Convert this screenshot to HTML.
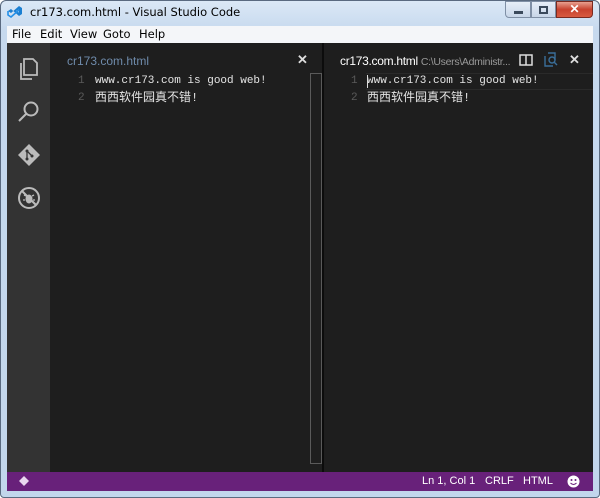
<!DOCTYPE html>
<html><head><meta charset="utf-8"><style>
*{margin:0;padding:0;box-sizing:border-box}
body{width:600px;height:498px;overflow:hidden;background:#fff;font-family:"Liberation Sans",sans-serif;position:relative}
.frame{position:absolute;left:0;top:0;width:600px;height:498px;background:linear-gradient(#dbe8f6,#c6d9ee 30px,#c2d6ec);border:1px solid #5a6a80;border-radius:6px 6px 4px 4px}
.title{position:absolute;left:30px;top:5px;color:#000;font-family:"DejaVu Sans",sans-serif;font-size:11.5px}
.menu{position:absolute;left:7px;top:26px;width:586px;height:17px;background:#f4f6f9;font-size:11.5px;font-family:"DejaVu Sans",sans-serif}
.menu span{position:absolute;top:1px}
.dark{position:absolute;left:7px;top:43px;width:586px;height:429px;background:#1e1e1e}
.act{position:absolute;left:7px;top:43px;width:43px;height:429px;background:#333}
.status{position:absolute;left:7px;top:472px;width:586px;height:19px;background:#68217a;color:#fff;font-size:11px}
.status span{position:absolute;top:3px}
.code{position:absolute;font-family:"Liberation Mono","Noto Sans CJK SC",monospace;font-size:11px;color:#e4e4e4;line-height:17px;white-space:nowrap}
.code .cjk{font-size:12px}
.ln{position:absolute;font-family:"Liberation Mono",monospace;font-size:11px;color:#5a5a5a;line-height:17px}
</style></head><body>
<div class="frame"></div>
<svg style="position:absolute;left:7px;top:6px" width="16" height="14" viewBox="0 0 16 14"><path d="M1 5 L4 3 L12 10 L15 8 L15 2 L12 0 L4 7 L1 5Z M12 3.5 L12 6.5 L9 5Z" fill="#1b7fd1"/><path d="M1 5 L1 9 L4 11 L12 4" stroke="#2490e8" stroke-width="1.6" fill="none"/></svg>
<div class="title">cr173.com.html - Visual Studio Code</div>
<div style="position:absolute;left:505px;top:1px;width:26px;height:17px;border:1px solid #7f8fa5;border-radius:0 0 0 4px;background:linear-gradient(#e6eef8,#c8d6e8)"><div style="position:absolute;left:8px;top:9px;width:9px;height:3px;background:#3b4a5c"></div></div>
<div style="position:absolute;left:531px;top:1px;width:25px;height:17px;border:1px solid #7f8fa5;background:linear-gradient(#e6eef8,#c8d6e8)"><div style="position:absolute;left:7px;top:4px;width:9px;height:8px;border:2px solid #3b4a5c"></div></div>
<div style="position:absolute;left:556px;top:1px;width:37px;height:17px;border:1px solid #7a2a20;border-radius:0 0 4px 0;background:linear-gradient(#e8a090,#c8422e 50%,#d85a40);color:#fff;font-size:12px;font-weight:bold;text-align:center;line-height:15px">✕</div>
<div class="menu"><span style="left:5px">File</span><span style="left:33px">Edit</span><span style="left:63px">View</span><span style="left:96px">Goto</span><span style="left:132px">Help</span></div>
<div class="dark"></div>
<div class="act"></div>
<svg style="position:absolute;left:18px;top:57px" width="22" height="24" viewBox="0 0 22 24" fill="none" stroke="#bbb" stroke-width="1.8"><path d="M6 2 H15 L19 6 V18 H6Z"/><path d="M3 6 V22 H14"/></svg>
<svg style="position:absolute;left:17px;top:100px" width="24" height="24" viewBox="0 0 24 24" fill="none" stroke="#bbb" stroke-width="2"><circle cx="14" cy="9" r="6.5"/><path d="M9.5 13.5 L2 21"/></svg>
<svg style="position:absolute;left:17px;top:143px" width="24" height="24" viewBox="0 0 24 24"><path d="M12 1 L23 12 L12 23 L1 12Z" fill="#bbb"/><circle cx="10" cy="8" r="1.5" fill="#333"/><circle cx="10" cy="16" r="1.5" fill="#333"/><circle cx="15" cy="13" r="1.5" fill="#333"/><path d="M10 8 V16 M10 8 L15 13" stroke="#333" stroke-width="1.3"/></svg>
<svg style="position:absolute;left:17px;top:186px" width="24" height="24" viewBox="0 0 24 24" fill="none" stroke="#bbb" stroke-width="2"><circle cx="12" cy="12" r="10"/><path d="M5 5 L19 19"/><ellipse cx="12" cy="13" rx="3.5" ry="4.5" fill="#bbb" stroke="none"/><path d="M7 9 L9 10 M17 9 L15 10 M6 14 H8 M18 14 H16" stroke-width="1.3"/></svg>
<div style="position:absolute;left:67px;top:54px;font-size:12px;color:#6f8bab">cr173.com.html</div>
<div style="position:absolute;left:297px;top:52px;font-size:13px;color:#ddd;font-weight:bold">✕</div>
<div class="ln" style="left:78px;top:73px">1<br>2</div>
<div class="code" style="left:95px;top:73px">www.cr173.com is good web!<br><span class="cjk">西西软件园真不错!</span></div>
<div style="position:absolute;left:310px;top:73px;width:12px;height:391px;border:1px solid #5a5a5a"></div>
<div style="position:absolute;left:322px;top:43px;width:2px;height:429px;background:#0c0c0c"></div>
<div style="position:absolute;left:340px;top:54px;font-size:12px;color:#fff;white-space:nowrap;letter-spacing:-0.3px">cr173.com.html <span style="font-size:10.5px;color:#999">C:\Users\Administr...</span></div>
<svg style="position:absolute;left:519px;top:54px" width="14" height="12"><rect x="1" y="1" width="12" height="10" fill="none" stroke="#ddd" stroke-width="1.5"/><path d="M7 1 V11" stroke="#ddd" stroke-width="1.5"/></svg>
<svg style="position:absolute;left:543px;top:52px" width="16" height="16" fill="none" stroke="#3a6f9a" stroke-width="1.4"><path d="M2 4 V14 H10 M5 1 H12 V8"/><circle cx="9" cy="8" r="3"/><path d="M11 10 L14 13"/></svg>
<div style="position:absolute;left:569px;top:52px;font-size:13px;color:#ddd;font-weight:bold">✕</div>
<div style="position:absolute;left:366px;top:73px;width:227px;height:17px;border-top:1px solid #2a2a2a;border-bottom:1px solid #2a2a2a"></div>
<div class="ln" style="left:351px;top:73px">1<br>2</div>
<div class="code" style="left:367px;top:73px">www.cr173.com is good web!<br><span class="cjk">西西软件园真不错!</span></div>
<div style="position:absolute;left:367px;top:75px;width:1px;height:13px;background:#ddd"></div>
<div class="status"><svg style="position:absolute;left:12px;top:4px" width="10" height="10"><path d="M5 0 L10 5 L5 10 L0 5Z" fill="#e8d8ee"/></svg><span style="left:415px">Ln 1, Col 1</span><span style="left:478px">CRLF</span><span style="left:516px">HTML</span><svg style="position:absolute;left:560px;top:3px" width="13" height="13"><circle cx="6.5" cy="6.5" r="6" fill="#fff"/><circle cx="4.5" cy="5" r="1" fill="#68217a"/><circle cx="8.5" cy="5" r="1" fill="#68217a"/><path d="M3.5 8 Q6.5 11 9.5 8" stroke="#68217a" fill="none"/></svg></div>
</body></html>
